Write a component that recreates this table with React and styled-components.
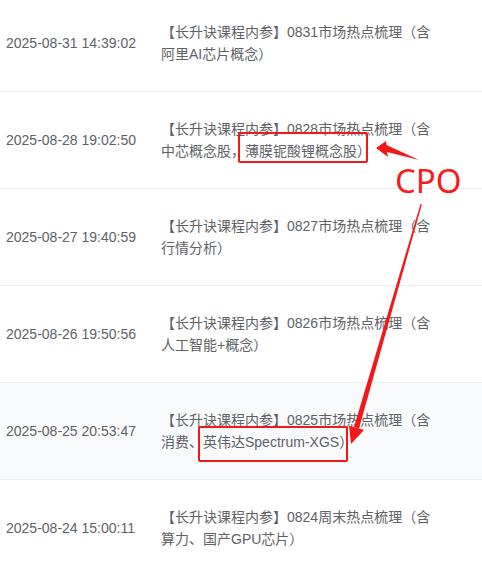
import React from 'react'
import styled, { createGlobalStyle } from 'styled-components'

const GlobalStyle = createGlobalStyle`
  html, body {
    margin: 0;
    padding: 0;
    background: #ffffff;
    overflow: hidden;
  }
`

const Page = styled.div`
  position: relative;
  width: 482px;
  height: 566px;
  overflow: hidden;
  font-family: "Liberation Sans", "Noto Sans CJK SC", sans-serif;
  font-size: 14px;
  color: #606266;
`

const Table = styled.div`
  margin-top: -5px;
  display: flex;
  flex-direction: column;
`

const Row = styled.div`
  display: grid;
  grid-template-columns: 161px 276px;
  align-items: center;
  height: 96px;
  border-bottom: 1px solid #ebeef5;
  background: ${(p) => (p.$hover ? '#f9fafc' : '#ffffff')};
`

const DateCell = styled.div`
  padding-left: 6px;
  white-space: nowrap;
`

const TitleCell = styled.div`
  display: flex;
  flex-direction: column;
  line-height: 22px;
`

const Line = styled.div`
  white-space: nowrap;
`

const Highlight = styled.span`
  position: relative;

  &::after {
    content: '';
    position: absolute;
    left: ${(p) => p.$l}px;
    right: ${(p) => p.$r}px;
    top: ${(p) => p.$t}px;
    bottom: ${(p) => p.$b}px;
    border: 2px solid #f01818;
    border-radius: 2px;
    pointer-events: none;
  }
`

const Overlay = styled.svg`
  position: absolute;
  left: 0;
  top: 0;
  width: 482px;
  height: 566px;
  pointer-events: none;
`

const Label = styled.div`
  position: absolute;
  left: 395px;
  top: 164px;
  font-family: "Noto Sans", sans-serif;
  font-size: 33px;
  line-height: 33px;
  color: #fa1a1a;
  pointer-events: none;
`

const rows = [
  {
    date: '2025-08-31 14:39:02',
    lines: ['【长升诀课程内参】0831市场热点梳理（含', '阿里AI芯片概念）'],
  },
  {
    date: '2025-08-28 19:02:50',
    lines: [
      '【长升诀课程内参】0828市场热点梳理（含',
      <>
        <span>中芯概念股，</span>
        <Highlight $l={-7} $r={3} $t={-11} $b={-4}>薄膜铌酸锂概念股）</Highlight>
      </>,
    ],
  },
  {
    date: '2025-08-27 19:40:59',
    lines: ['【长升诀课程内参】0827市场热点梳理（含', '行情分析）'],
  },
  {
    date: '2025-08-26 19:50:56',
    lines: ['【长升诀课程内参】0826市场热点梳理（含', '人工智能+概念）'],
  },
  {
    date: '2025-08-25 20:53:47',
    hover: true,
    lines: [
      '【长升诀课程内参】0825市场热点梳理（含',
      <>
        <span>消费、</span>
        <Highlight $l={-5} $r={5} $t={-8} $b={-12}>英伟达Spectrum-XGS）</Highlight>
      </>,
    ],
  },
  {
    date: '2025-08-24 15:00:11',
    lines: ['【长升诀课程内参】0824周末热点梳理（含', '算力、国产GPU芯片）'],
  },
]

const App = () => {
  return (
    <Page>
      <GlobalStyle />
      <Table>
        {rows.map((row) => (
          <Row key={row.date} $hover={row.hover}>
            <DateCell>{row.date}</DateCell>
            <TitleCell>
              {row.lines.map((line, i) => (
                <Line key={i}>{line}</Line>
              ))}
            </TitleCell>
          </Row>
        ))}
      </Table>

      <Overlay viewBox="0 0 482 566">
        {/* short arrow to the first box */}
        <polygon points="376,148 386,141 386.5,145 419,160 387,152 388,157" fill="#f01818" />
        {/* long arrow from CPO down to the second box */}
        <polygon points="420.5,204 421.8,204.4 359,428.5 354,427" fill="#f01818" />
        <polygon points="351,444 349,425.5 364,430" fill="#f01818" />
      </Overlay>
      <Label>CPO</Label>
    </Page>
  )
}

export default App
